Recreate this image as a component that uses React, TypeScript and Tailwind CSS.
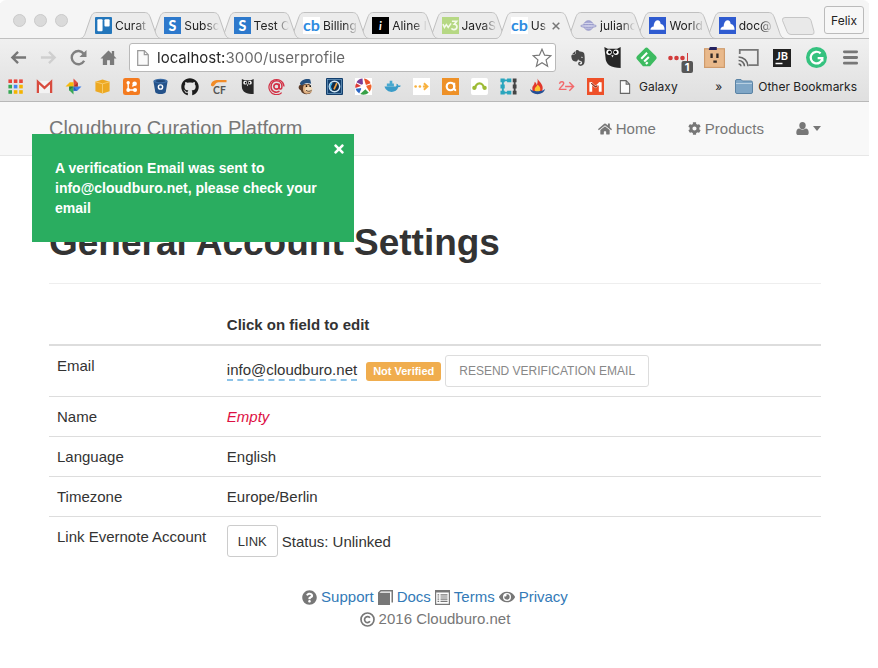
import type { ReactNode } from 'react';
import { FaHome, FaCog, FaQuestionCircle, FaEye, FaGithub, FaTimes, FaEvernote } from 'react-icons/fa';

/* ---------- drawing helpers ---------- */

function Art({ children, size = 17 }: { children: ReactNode; size?: number }) {
  return (
    <svg width={size} height={size} viewBox="0 0 18 18" className="shrink-0" aria-hidden="true">
      {children}
    </svg>
  );
}

function Letter({ x = 9, y, size, fill, children, weight = 700, italic = false }: {
  x?: number; y: number; size: number; fill: string; children: string; weight?: number; italic?: boolean;
}) {
  return (
    <text x={x} y={y} fontSize={size} fill={fill} textAnchor="middle" fontWeight={weight}
      fontStyle={italic ? 'italic' : 'normal'} fontFamily="Lato, 'Liberation Sans', sans-serif">
      {children}
    </text>
  );
}

/* ---------- tab favicons ---------- */

const trello = (
  <Art>
    <rect width="18" height="18" rx="1" fill="#2376bb" />
    <rect x="2.5" y="2.5" width="5.5" height="12.5" rx="1" fill="#fff" />
    <rect x="10" y="2.5" width="5.5" height="7.5" rx="1" fill="#fff" />
  </Art>
);
const stripe = (
  <Art>
    <rect width="18" height="18" fill="#2d79cc" />
    <Letter y={14.5} size={15} fill="#fff" weight={900}>S</Letter>
  </Art>
);
const cb = (
  <Art>
    <rect width="18" height="18" fill="#fff" />
    <Letter y={14.5} size={17} fill="#2d8be0">cb</Letter>
  </Art>
);
const aline = (
  <Art>
    <rect width="18" height="18" fill="#000" />
    <Letter y={13.5} size={12} fill="#fff" italic>i</Letter>
  </Art>
);
const w3 = (
  <Art>
    <rect width="18" height="18" fill="#b6d884" />
    <path d="M1 7.5l1.6 3.5 2-3 2 3 3-4.2" fill="none" stroke="#f4faea" strokeWidth="1.6" />
    <path d="M10.5 4.5h5l-2.5 3.2c4 .2 3.6 5.6-.4 5.6-1.4 0-2.2-.6-2.6-1.3" fill="none" stroke="#f4faea" strokeWidth="1.8" />
  </Art>
);
const planet = (
  <Art>
    <circle cx="9" cy="9" r="5" fill="#a9abd6" stroke="#9293c6" />
    <path d="M4.500 7h9M5 11.500h8" stroke="#dcdcf0" />
    <ellipse cx="9" cy="9.500" rx="8.500" ry="1.600" fill="#c9cae6" stroke="#9293c6" strokeWidth=".8" />
  </Art>
);
const cloud = (
  <Art>
    <rect width="18" height="18" fill="#2f5bd0" />
    <path d="M1.500 13.500c0-2 1.500-3.500 3.500-3.500 0-3 1.500-6.500 4-6.500 2.300 0 3 1.800 3.400 3.800 2.600.2 4.100 2.700 4.100 6.200z" fill="#fff" />
  </Art>
);

const tabs = [
  { title: 'Curat', icon: trello },
  { title: 'Subsc', icon: stripe },
  { title: 'Test C', icon: stripe },
  { title: 'Billing', icon: cb },
  { title: 'Aline I', icon: aline },
  { title: 'JavaS', icon: w3 },
  { title: 'Us', icon: cb, active: true },
  { title: 'julianc', icon: planet },
  { title: 'World', icon: cloud },
  { title: 'doc@', icon: cloud },
];

function Tab({ title, icon, active, order }: { title: string; icon: ReactNode; active?: boolean; order: number }) {
  return (
    <div role="tab" aria-selected={!!active} className="relative h-[27px]" style={{ zIndex: active ? 30 : 20 - order }}>
      <svg className="absolute left-0 top-0" width="82" height="27" viewBox="0 0 82 27" aria-hidden="true">
        <path d="M0 26.500C4 26 5 22 6 19L10.500 6C12 2 13 .5 17 .5H64C68 .5 69 2 70.500 6L75 19C76 22 77 26 81 26.500V27H0z"
          fill={active ? '#f0f0f0' : '#ebebeb'} />
        <path d="M0 26.500C4 26 5 22 6 19L10.500 6C12 2 13 .5 17 .5H64C68 .5 69 2 70.500 6L75 19C76 22 77 26 81 26.500"
          fill="none" stroke="#c0c0c0" />
        {!active && <path d="M0 26.500H82" stroke="#c0c0c0" />}
      </svg>
      <div className="relative flex h-[27px] items-center pl-[15px]">
        {icon}
        <span className={(active ? 'w-[17px]' : 'w-[35px]') + ' ml-[3px] shrink-0 whitespace-nowrap text-[12px] leading-4 text-[#222] [mask-image:linear-gradient(to_right,#000_60%,transparent)]'}>
          {title}
        </span>
        {active && (
          <button type="button" aria-label="Close tab" className="ml-1 shrink-0">
            <svg width="8" height="8" viewBox="0 0 8 8"><path d="M.7.7l6.600 6.600M7.300.7L.7 7.300" stroke="#777" strokeWidth="1.500" /></svg>
          </button>
        )}
      </div>
    </div>
  );
}

/* ---------- bookmarks ---------- */

const appColors = ['#e8453c', '#e8453c', '#e8453c', '#35a853', '#4285f4', '#f5b400', '#35a853', '#f5b400', '#f5b400'];

const bookmarks: { name: string; art: ReactNode }[] = [
  { name: 'Apps', art: <Art>{appColors.map((c, i) => <rect key={i} x={1.5 + (i % 3) * 5.7} y={1.5 + Math.floor(i / 3) * 5.7} width="3.8" height="3.8" fill={c} />)}</Art> },
  { name: 'Gmail', art: <Art><path d="M1 3h16v13H1z" fill="#f3f3f3" /><path d="M2 16V4l7 6.500L16 4v12" fill="none" stroke="#d84b3e" strokeWidth="2.400" /></Art> },
  { name: 'Photos', art: (
    <Art>
      <path d="M9 9V.5l4.500 4.500V9z" fill="#e04a3f" /><path d="M9 9h8.500L13 13.500H9z" fill="#3f7ee8" />
      <path d="M9 9v8.500L4.500 13V9z" fill="#3aa757" /><path d="M9 9H.5L5 4.500h4z" fill="#f6b90c" />
      <path d="M9 9l4.500-4V9z" fill="#a8322a" /><path d="M9 9H4.500V13z" fill="#2b7a40" /><path d="M9 9v4.500h4z" fill="#2b5fc0" />
    </Art>
  ) },
  { name: 'AWS', art: <Art><path d="M1.500 4L9 1.500 16.500 4v10L9 16.500 1.500 14z" fill="#eda922" /><path d="M1.500 4L9 6.200 16.500 4M9 6.200v10.300" fill="none" stroke="#f8cd70" /></Art> },
  { name: 'Orange', art: <Art><rect width="18" height="18" rx="2.500" fill="#f47b20" /><path d="M5.500 5v7.700h7.200M12.500 6L10 9" fill="none" stroke="#fff" strokeWidth="1.500" /><circle cx="5.500" cy="5" r="1.800" fill="#fff" /><circle cx="5.500" cy="12.700" r="2" fill="#fff" /><circle cx="12.700" cy="12.700" r="2.200" fill="#fff" /><circle cx="12.300" cy="6" r="2.400" fill="#fff" /></Art> },
  { name: 'Bitbucket', art: <Art><path d="M1.500 3.500L3.500 15c1 2.500 10 2.500 11 0l2-11.500z" fill="#24528a" /><ellipse cx="9" cy="3.300" rx="7.500" ry="2.500" fill="#3b6ca6" /><ellipse cx="9" cy="3.300" rx="5" ry="1.100" fill="#1e4474" /><circle cx="9" cy="9.500" r="3" fill="#fff" /><circle cx="9" cy="9.500" r="1.500" fill="#24528a" /></Art> },
  { name: 'GitHub', art: <FaGithub className="size-[18px] text-[#1b1b1b]" /> },
  { name: 'Cloudflare', art: <Art><path d="M1 8c0-4 3-5.500 6-6h10.500v2.500H9C6 4.500 5.500 8 3 9z" fill="#f28c28" /><Letter x={10} y={17} size={11} fill="#555">CF</Letter></Art> },
  { name: 'Hootsuite', art: <Art><path d="M3 1l3 1.500h6.500L15.500 1v16c-7 0-12.500-2-12.500-8z" fill="#282828" /><circle cx="6.500" cy="5" r="2" fill="#fff" /><circle cx="11.500" cy="5" r="2" fill="#fff" /><circle cx="7" cy="5" r=".9" /><circle cx="11" cy="5" r=".9" /><path d="M8.200 7h1.600L9 8.800z" fill="#fff" /></Art> },
  { name: 'Mail', art: <Art><circle cx="9" cy="9" r="2.800" fill="none" stroke="#d23246" strokeWidth="1.700" /><path d="M11.800 6v4.500c.5 2 3 1.500 3-1.500 0-8-11.600-8-11.600 0 0 6 6 7 9 5" fill="none" stroke="#d23246" strokeWidth="1.600" /><path d="M14.500 15.500A8 8 0 1 1 17 9" fill="none" stroke="#d23246" strokeWidth="1.300" /></Art> },
  { name: 'MailChimp', art: <Art><path d="M4 7c-3 1-3 5 0 6 1 4 5 4.500 8 4 3-.5 4-3 3.500-6L13 6z" fill="#5a3b28" /><path d="M7 8c3-2 7-1 8 2l1 3c0 3-5 4.500-8 3-2-2-2-5-1-8z" fill="#e2b384" /><path d="M3 6c1-4 7-6 11-4.500L15 6C11 4.500 8 5 5 8z" fill="#26507e" /><ellipse cx="12.500" cy="12" rx="3.800" ry="2.800" fill="#f2ddbd" /><circle cx="10" cy="8.500" r=".9" /><circle cx="14" cy="8.500" r=".9" /><path d="M9.500 13c2 1.500 4 1.500 6 0" fill="none" stroke="#5a3b28" /></Art> },
  { name: 'Gauge', art: <Art><rect width="18" height="18" rx="1" fill="#133f6d" /><rect x="1.500" y="1.500" width="15" height="15" fill="none" stroke="#7aa8cc" strokeWidth=".7" /><circle cx="9" cy="9" r="5.500" fill="#102c4a" stroke="#cfe6f5" strokeWidth="1.500" /><path d="M6 12.500a4.500 4.500 0 0 1 .5-7" fill="none" stroke="#45b2e8" strokeWidth="1.600" /><path d="M8.500 12l3-6.500" stroke="#f3a03a" strokeWidth="1.800" /></Art> },
  { name: 'Picasa', art: <Art><rect width="18" height="18" fill="#fff" /><path d="M8 .6L8.500 8 1.500 4.500A8.500 8.500 0 0 1 8 .6z" fill="#7a3f98" /><path d="M9.500.5a8.500 8.500 0 0 1 7 5L11.500 7.500z" fill="#e8502a" /><path d="M17 6.500A8.500 8.500 0 0 1 15.500 14.500L11.500 8.500z" fill="#f0642d" /><path d="M14.500 15.500a8.500 8.500 0 0 1-9 1.500L11 12z" fill="#38a047" /><path d="M4.500 16.500A8.500 8.500 0 0 1 .6 11.500L7 10.500z" fill="#2c67c5" /><path d="M.4 10.500A8.500 8.500 0 0 1 1.200 5.500L6.500 8.500z" fill="#de3b38" /><circle cx="9" cy="9.300" r="3" fill="#fff" /></Art> },
  { name: 'Docker', art: <Art><path d="M.5 9h12c1-.5 1-2 .5-3 1.500 0 2 1 2.200 2 1-.3 2-.2 2.600.3-.6 1.200-1.500 1.500-2.800 1.500C13.500 16 3 17 .5 9z" fill="#3b9cc8" /><path d="M3 5.800h7.500V9H3zM6 3h2.800v3H6z" fill="#49a9cf" /></Art> },
  { name: 'Arrow', art: <Art><rect width="18" height="18" fill="#fff" /><circle cx="2.800" cy="9" r="1.400" fill="#f8b13e" /><circle cx="7.300" cy="9" r="1.400" fill="#f8b13e" /><path d="M11.500 5.500L15.300 9l-3.800 3.500M10.500 9H15" fill="none" stroke="#f8b13e" strokeWidth="2" /></Art> },
  { name: 'Analytics', art: <Art><rect width="18" height="18" fill="#ee9128" /><circle cx="9" cy="9" r="4" fill="none" stroke="#fff" strokeWidth="2.300" /><path d="M13 5v5.500c0 2 1 2.500 2 2.500" fill="none" stroke="#fff" strokeWidth="2" /></Art> },
  { name: 'SurveyMonkey', art: <Art><rect width="18" height="18" rx="2" fill="#fff" /><path d="M4.500 11c0-7 9-7 9 0" fill="none" stroke="#9dbb35" strokeWidth="2.400" /><circle cx="3.500" cy="10.500" r="2.200" fill="#9dbb35" /><circle cx="14.500" cy="10.500" r="2.200" fill="#9dbb35" /></Art> },
  { name: 'Frame', art: <Art><path d="M10 2.500H3v13h7" fill="none" stroke="#2aa5bd" strokeWidth="2" /><path d="M15.500 2v14" stroke="#444" strokeWidth="2" /><path d="M.5.5h4.500v4H.5zM7.500.5H12v4H7.500zM.5 7H5v4H.5zM.5 13.500H5v4H.5zM7.500 13.500H12v4H7.500z" fill="#2aa5bd" /><path d="M13.500.5h4v4h-4zM13.500 7h4v4h-4zM13.500 13.500h4v4h-4z" fill="#444" /></Art> },
  { name: 'Flame', art: <Art><path d="M9 .5c1 3 5.500 5 5.500 10 0 4-3 6-5.500 6s-5.500-1.500-5.500-5.500C3.500 8 6 7.500 6 4c1.500 1 2 2 2 3.500C9 6 9.500 3.500 9 .5z" fill="#e2382c" /><path d="M9 7c2 2 3 3 3 5s-1.500 3-3 3-3-1-3-3 2.500-2.500 3-5z" fill="#fbc530" /><path d="M1 11.500c1.500 3.500 14.500 3.500 16 0-1 7.500-15 7.500-16 0z" fill="#254f95" /></Art> },
  { name: 'Route', art: <Art><path d="M1.500 6c1-3 5-2.500 4.500 0C5.500 8.500 2 9.500 1.500 12H9M7.500 9H16M12 4.500L16.500 9 12 13.500" fill="none" stroke="#f2696b" strokeWidth="1.500" /></Art> },
  { name: 'Metrics', art: <Art><rect width="18" height="18" fill="#ee5029" /><path d="M4 14.500V4.500M14 4.500v10" stroke="#fff" strokeWidth="3" /><path d="M4 5l5 4.500L14 5" fill="none" stroke="#fff" strokeWidth="2" /><path d="M4.500 5.500L9 9.500l2-1.500" fill="none" stroke="#8d2813" strokeWidth="1.200" /></Art> },
];

function PageGlyph({ className }: { className?: string }) {
  return (
    <svg width="12" height="16" viewBox="0 0 12 16" className={className} aria-hidden="true">
      <path d="M.7.7h6.600l4 4v10.600H.7zM7.300.7v4h4" fill="#fafafa" stroke="currentColor" strokeWidth="1.200" />
    </svg>
  );
}

/* ---------- toolbar ---------- */

const navButtons = [
  { name: 'Back', art: <path d="M17 9H2.500M8.500 3L2.500 9l6 6" fill="none" stroke="#777" strokeWidth="2.500" /> },
  { name: 'Forward', art: <path d="M1 9h14.500M9.500 3l6 6-6 6" fill="none" stroke="#cfcfcf" strokeWidth="2.500" /> },
  { name: 'Reload', art: <><path d="M15 12.500A7 7 0 1 1 14.500 5" fill="none" stroke="#808080" strokeWidth="2.500" /><path d="M17.500 1v7.500H10z" fill="#808080" /></> },
  { name: 'Home', art: <path d="M9 1.500L.5 10H3v7h4.500v-5h3v5H15v-7h2.500L15 7.500V2h-2.500v3z" fill="#7b7b7b" /> },
];

const extensions = [
  { name: 'Evernote', art: <FaEvernote className="size-[18px] text-[#484848]" /> },
  { name: 'Owl', art: <Art size={21}><path d="M2 0l3 1.500h8L16 0v18c-8 0-13-3-13-9z" fill="#262626" /><circle cx="6" cy="4.500" r="2.300" fill="#fff" /><circle cx="12" cy="4.500" r="2.300" fill="#fff" /><circle cx="6.500" cy="4.500" r="1.200" /><circle cx="11.500" cy="4.500" r="1.200" /><path d="M8 7h2l-1 2z" fill="#fff" /></Art> },
  { name: 'Feedly', art: <Art size={21}><path d="M7.500 1.200q1.500-1.400 3 0L17 7.700q1.400 1.500 0 3L12 16.500H6L1 10.700q-1.400-1.500 0-3z" fill="#3dbb60" /><path d="M4.500 10l5-5M7 12.500l4-4M8.500 14.500l1.500-1.500" stroke="#fff" strokeWidth="1.800" /></Art> },
  { name: 'Passwords', art: <svg width="26" height="30" viewBox="0 0 26 30"><circle cx="3.500" cy="15" r="2.300" fill="#d23b3b" /><circle cx="9.500" cy="15" r="2.300" fill="#d23b3b" /><circle cx="15.500" cy="15" r="2.300" fill="#d23b3b" /><path d="M20.500 10v10" stroke="#d23b3b" /><rect x="14.500" y="18" width="11.500" height="12" rx="2" fill="#565656" /><text x="20.200" y="28" fontSize="11" fontWeight="700" fill="#fff" textAnchor="middle" fontFamily="Inter, sans-serif">1</text></svg> },
  { name: 'Boxy', art: <Art size={21}><rect x=".5" y="1.500" width="17" height="16" fill="#e9b98b" stroke="#cf9b6c" /><path d="M5 0h6v2.500H4z" fill="#252360" /><path d="M5.500 5.500h2v4h-2zM10.500 5.500h2v4h-2zM8 11.500h3v2H8z" fill="#332a26" /></Art> },
  { name: 'Cast', art: <Art size={21}><path d="M1.500 6V2.500h15.500v13H9" fill="none" stroke="#777" strokeWidth="1.500" /><path d="M.5 8.500a8 8 0 0 1 8 8M.5 11.500a5 5 0 0 1 5 5M.5 14.500a2 2 0 0 1 2 2" fill="none" stroke="#666" strokeWidth="1.300" /></Art> },
  { name: 'JetBrains', art: <Art size={18}><rect width="18" height="18" fill="#222" /><Letter x={9} y={10.5} size={11} fill="#fff">JB</Letter><path d="M2.500 14.500h7" stroke="#fff" strokeWidth="1.500" /></Art> },
  { name: 'Grammarly', art: <Art size={21}><circle cx="9" cy="9" r="9" fill="#35c27f" /><path d="M12.500 5.500A5 5 0 1 0 14 9.500h-4M14 9.500v3" fill="none" stroke="#fff" strokeWidth="1.900" /></Art> },
  { name: 'Menu', art: <Art size={17}><path d="M2.500 3h13M2.500 9h13M2.500 15h13" stroke="#777" strokeWidth="3" strokeLinecap="round" /></Art> },
];

function BrowserChrome() {
  return (
    <header className="font-[Inter,'Liberation_Sans',sans-serif]">
      <div className="flex h-[39px] rounded-t-md bg-[#f5f5f5] shadow-[inset_0_-1px_0_#c0c0c0]">
        <div className="flex w-20 shrink-0 gap-2 pl-[13px] pt-[14px]">
          {['Close', 'Minimize', 'Zoom'].map((n) => (
            <button key={n} type="button" aria-label={n} className="size-[13px] rounded-full border border-[#cacaca] bg-[#dadada]" />
          ))}
        </div>
        <div role="tablist" className="mt-3 grid w-[693px] shrink-0 grid-cols-10">
          {tabs.map((t, i) => <Tab key={i} order={i} {...t} />)}
        </div>
        <button type="button" aria-label="New tab" className="ml-2 mt-[17px] h-[18px] w-[34px] shrink-0">
          <svg width="34" height="18" viewBox="0 0 34 18">
            <path d="M4 .5h22q3 0 4 3l3 11q.6 3-2 3H10q-3 0-4-3L1.500 3.500Q1 .5 4 .5z" fill="#e9e9e9" stroke="#c6c6c6" />
          </svg>
        </button>
        <button type="button" className="ml-auto mr-[5px] mt-[6px] h-7 shrink-0 rounded-[3px] border border-[#bbb] bg-[#f7f7f7] px-[6px] text-[12px] text-[#222]">
          Felix
        </button>
      </div>

      <div className="bg-linear-to-b from-[#f0f0f0] to-[#dfdfdf] pt-1">
        <div className="flex h-[29px] items-center pl-[10px] pr-[2px]">
          <div className="flex shrink-0 gap-[13px]">
            {navButtons.map((b) => (
              <button key={b.name} type="button" aria-label={b.name}><Art>{b.art}</Art></button>
            ))}
          </div>
          <div className="ml-3 flex h-[29px] min-w-0 flex-1 items-center rounded-[3px] border border-[#b9b9b9] bg-white pl-[7px] pr-[3px]">
            <PageGlyph className="shrink-0 text-[#999]" />
            <input aria-label="Address" defaultValue="localhost:3000/userprofile"
              className="ml-2 min-w-0 flex-1 bg-[linear-gradient(to_right,#222_67px,#666_67px)] bg-clip-text text-[15px] text-transparent caret-black outline-none" />
            <button type="button" aria-label="Bookmark this page">
              <svg width="20" height="20" viewBox="0 0 20 20"><path d="M10 1.200l2.600 6 6.200.5-4.700 4.200 1.500 6.300L10 14.800l-5.600 3.400 1.500-6.300L1.200 7.700l6.200-.5z" fill="#fff" stroke="#777" strokeWidth="1.200" /></svg>
            </button>
          </div>
          <div className="ml-[5px] flex shrink-0">
            {extensions.map((e) => (
              <button key={e.name} type="button" aria-label={e.name} className="flex h-[29px] w-[34px] shrink-0 items-center justify-center">{e.art}</button>
            ))}
          </div>
        </div>
        <nav aria-label="Bookmarks" className="flex h-[30px] items-center border-b border-[#b8b8b8] pl-px pr-3 text-[12px] text-[#222]">
          {bookmarks.map((b) => (
            <a key={b.name} href="#" aria-label={b.name} className="flex w-[29px] shrink-0 justify-center">{b.art}</a>
          ))}
          <a href="#" className="ml-[9px] flex items-center gap-2"><PageGlyph className="h-[14px] text-[#666]" />Galaxy</a>
          <button type="button" aria-label="More bookmarks" className="ml-auto">»</button>
          <a href="#" className="ml-[13px] flex items-center gap-[5px] whitespace-nowrap">
            <svg width="18" height="15" viewBox="0 0 18 15" aria-hidden="true"><path d="M.5 2q0-1.500 1.500-1.500h4l1.500 1.500H16q1.500 0 1.500 1.500v9.500q0 1.500-1.500 1.500H2q-1.500 0-1.500-1.500z" fill="#7fa6c6" stroke="#5a83a5" /><path d="M1 4.500h16" stroke="#b8d0e2" /></svg>
            Other Bookmarks
          </a>
        </nav>
      </div>
    </header>
  );
}

/* ---------- page ---------- */

function UserGlyph() {
  return <svg width="13" height="13" viewBox="0 0 13 13" className="shrink-0" aria-hidden="true"><ellipse cx="6.500" cy="3.600" rx="3.200" ry="3.600" fill="#777" /><path d="M3.300 6.500C1.200 6.700.3 8 .3 10.700.3 12.200 1 13 2.300 13h8.400c1.300 0 2-.8 2-2.300 0-2.700-.9-4-3-4.200-1.800 1.500-4.600 1.500-6.400 0z" fill="#777" /></svg>;
}
function Caret() {
  return <svg width="8" height="5" viewBox="0 0 8 5" className="shrink-0" aria-hidden="true"><path d="M0 0h8L4 5z" fill="#777" /></svg>;
}
function BookGlyph() {
  return <svg width="15" height="15" viewBox="0 0 15 15" className="shrink-0" aria-hidden="true"><path d="M0 2.500L2.500 0H15v12.500h-1.500V1.500H3L1.500 2.800H12V15H0z" fill="#777" /></svg>;
}
function ListGlyph() {
  return <svg width="15" height="15" viewBox="0 0 15 15" className="shrink-0" aria-hidden="true"><path d="M.6.6h13.800v13.800H.6z" fill="#fff" stroke="#777" strokeWidth="1.200" /><path d="M0 0h15v2.500H0z" fill="#777" /><path d="M2.500 4.800h1.700M2.500 7h1.700M2.500 9.200h1.700M2.500 11.400h1.700M5.500 4.800h7M5.500 7h7M5.500 9.200h7M5.500 11.400h7" stroke="#777" strokeWidth="1.200" /></svg>;
}
function CopyrightGlyph() {
  return <svg width="15" height="15" viewBox="0 0 15 15" className="shrink-0" aria-hidden="true"><circle cx="7.500" cy="7.500" r="6.500" fill="none" stroke="#777" strokeWidth="1.700" /><path d="M10 5.800A3 3 0 1 0 10 9.300" fill="none" stroke="#777" strokeWidth="1.700" /></svg>;
}

const cell = 'border-t border-[#ddd] px-2 py-2 align-top font-normal';

function Row({ label, children }: { label: string; children: ReactNode }) {
  return (
    <tr>
      <th scope="row" className={cell + ' text-left'}>{label}</th>
      <td className={cell}>{children}</td>
    </tr>
  );
}

function Toast() {
  return (
    <div role="alert" className="absolute left-8 top-[32px] z-40 w-[322px] bg-[#2aad60] px-[23px] pb-6 pt-6 text-[14px] font-bold leading-5 text-white">
      <button type="button" aria-label="Close" className="absolute right-2 top-2"><FaTimes className="size-[14px]" /></button>
      A verification Email was sent to info@cloudburo.net, please check your email
    </div>
  );
}

export default function App() {
  return (
    <div className="bg-white pr-[9px] text-[15px] leading-[23px] text-[#333]">
      <BrowserChrome />
      <div className="relative font-['Liberation_Sans',Arial,sans-serif]">
        <Toast />
        <nav aria-label="Main" className="flex h-[54px] items-center border-b border-[#e7e7e7] bg-[#f8f8f8] pl-[49px] pr-12 text-[#777]">
          <a href="#" className="text-[20px]">Cloudburo Curation Platform</a>
          <a href="#" className="ml-auto flex items-center gap-1"><FaHome className="size-[14px]" />Home</a>
          <a href="#" className="ml-8 flex items-center gap-1"><FaCog className="size-[13px]" />Products</a>
          <button type="button" aria-label="Account" className="ml-8 flex items-center gap-1"><UserGlyph /><Caret /></button>
        </nav>

        <main className="pl-[49px] pr-12 pt-[66px]">
          <h1 className="border-b border-[#eee] pb-[19px] text-[37px] font-bold leading-[42px]">General Account Settings</h1>
          <table className="mt-[21px] w-full table-fixed border-collapse">
            <thead>
              <tr className="border-b-2 border-[#ddd]">
                <td className="w-[22%] p-2" />
                <th scope="col" className="px-2 py-2 text-left">Click on field to edit</th>
              </tr>
            </thead>
            <tbody>
              <Row label="Email">
                <div className="flex h-[34px] items-center">
                  <button type="button" className="border-b-2 border-dashed border-[#8cc3e8] leading-[18px]">info@cloudburo.net</button>
                  <span className="ml-[9px] rounded-[3px] bg-[#f0ad4e] px-[7px] text-[11px] font-bold leading-[19px] text-white">Not Verified</span>
                  <button type="button" className="ml-1 h-8 rounded-[3px] border border-[#ddd] px-[13px] text-[12px] text-[#888]">RESEND VERIFICATION EMAIL</button>
                </div>
              </Row>
              <Row label="Name"><button type="button" className="italic text-[#dd1144]">Empty</button></Row>
              <Row label="Language">English</Row>
              <Row label="Timezone">Europe/Berlin</Row>
              <Row label="Link Evernote Account">
                <div className="flex items-center gap-1">
                  <button type="button" className="h-8 rounded-[3px] border border-[#ccc] px-[10px] text-[13px]">LINK</button>
                  Status: Unlinked
                </div>
              </Row>
            </tbody>
          </table>
          <footer className="pb-6 pt-[21px] leading-[22px] text-[#777]">
            <div className="flex items-center justify-center gap-1">
              <FaQuestionCircle className="size-[15px]" /><a href="#" className="text-[#337ab7]">Support</a>
              <BookGlyph /><a href="#" className="text-[#337ab7]">Docs</a>
              <ListGlyph /><a href="#" className="text-[#337ab7]">Terms</a>
              <FaEye className="size-4" /><a href="#" className="text-[#337ab7]">Privacy</a>
            </div>
            <p className="flex items-center justify-center gap-1"><CopyrightGlyph />2016 Cloudburo.net</p>
          </footer>
        </main>
      </div>
    </div>
  );
}
